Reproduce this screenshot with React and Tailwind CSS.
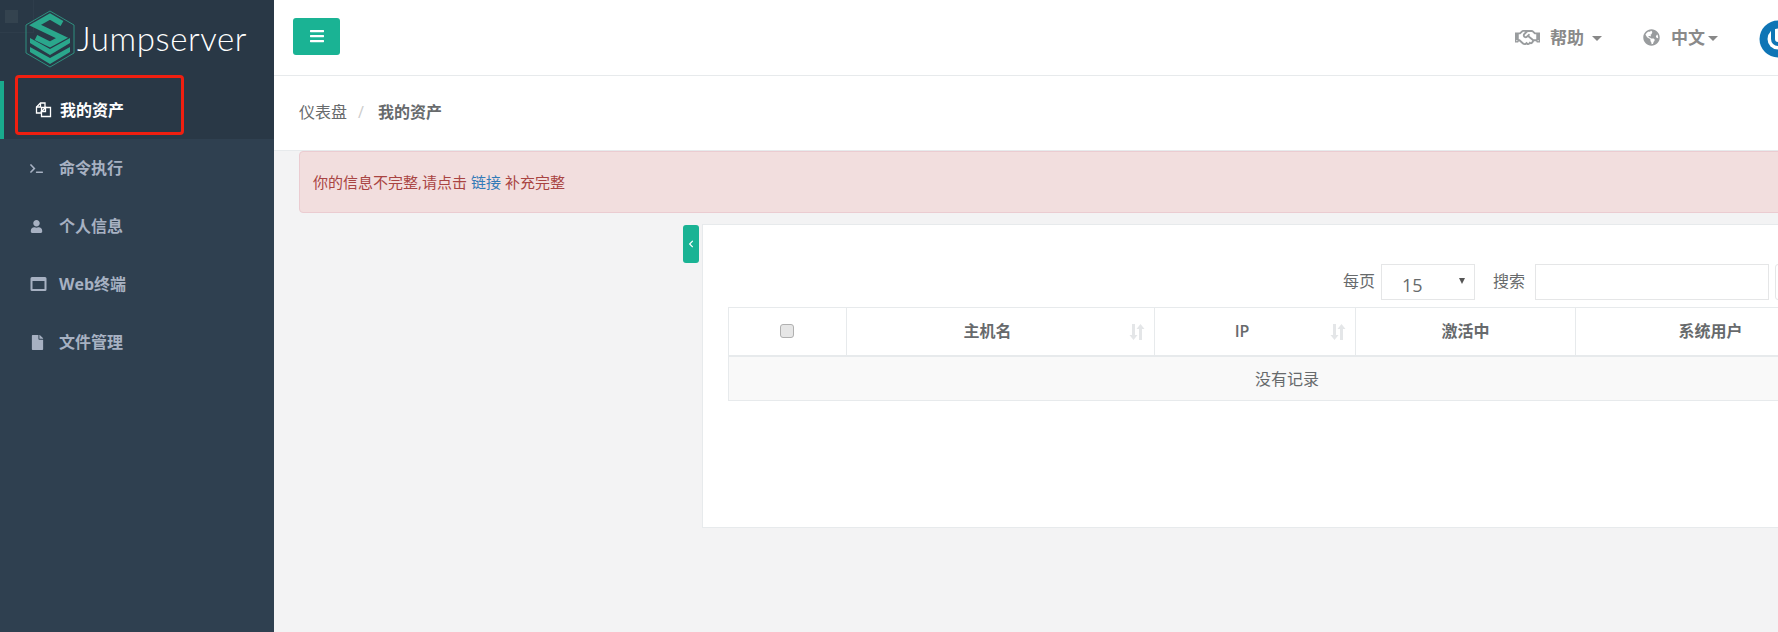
import React from "react";
import { FaTerminal, FaUser, FaFile, FaRegHandshake, FaGlobeAmericas, FaBars, FaChevronLeft } from "react-icons/fa";

const cjk = "font-['Open_Sans','Noto_Sans_CJK_SC',sans-serif]";

function Logo() {
  return (
    <svg width="50" height="58" viewBox="0 0 50 58" className="shrink-0">
      <path d="M25 1 L49 15 V43 L25 57 L1 43 V15 Z" fill="none" stroke="#2f8f7f" strokeWidth="1" />
      <path d="M5 28 L25 39 L45 28 V33 L25 45 L5 33 Z" fill="#2aa78c" />
      <path d="M5 37 L25 48 L45 37 V42 L25 54 L5 42 Z" fill="#2aa78c" />
      <path d="M37 13.500 L25 6.500 L10 15 L37 28 L25 34.500 L11 27.500" fill="none" stroke="#2aa78c" strokeWidth="5.500" />
    </svg>
  );
}

function FilesIcon() {
  return (
    <svg width="17" height="16" viewBox="0 0 17 16" fill="none" stroke="currentColor" strokeWidth="1.300">
      <path d="M6 11H1.500V5L5.500 1H10V5" />
      <path d="M1.500 5H5.500V1" />
      <path d="M6.500 5.500H15.500V14.500H6.500Z" fill="#293846" />
      <path d="M6.500 9.500L10.500 5.500V9.500Z" />
    </svg>
  );
}

function WindowIcon() {
  return (
    <svg width="17" height="14" viewBox="0 0 16 14">
      <path fillRule="evenodd" d="M1.500 0h13A1.500 1.500 0 0 1 16 1.500v11a1.500 1.500 0 0 1-1.500 1.500h-13A1.500 1.500 0 0 1 0 12.500v-11A1.500 1.500 0 0 1 1.500 0ZM2 4v8h12V4Z" fill="currentColor" />
    </svg>
  );
}

function SortIcon() {
  return (
    <svg width="16" height="18" viewBox="0 0 16 18" className="text-[#e4e6e8]">
      <path d="M3 1h3v11h2.500L4.500 17 .5 12H3Z M10 17h3V6h2.500L11.500 1 7.500 6H10Z" fill="currentColor" />
    </svg>
  );
}

function NavItem({ icon, label, active }) {
  return (
    <div className={active
      ? "h-[58px] flex items-center pl-[31px] border-l-4 border-[#19aa8d] bg-[#293846] text-white"
      : "h-[58px] flex items-center pl-[30px] text-[#a7b1c2]"}>
      <span className={active ? "w-[25px] flex items-center" : "w-[29px] flex items-center"}>{icon}</span>
      <span className="text-[16px] font-bold">{label}</span>
    </div>
  );
}

function HeadCell({ w, label, sort, bold, last }) {
  return (
    <div className={`relative shrink-0 h-full flex items-center justify-center text-[16px] text-[#676a6c] ${bold ? "font-bold" : "font-semibold"} ${last ? "" : "border-r border-[#e7eaec]"} ${sort ? "pr-[26px]" : ""} ${w}`}>
      <span className="-mt-[2px]">{label}</span>
      {sort && <span className="absolute right-[9px] top-[15px]"><SortIcon /></span>}
    </div>
  );
}

export default function App() {
  return (
    <div className={`relative w-[1778px] h-[632px] overflow-hidden flex bg-[#f3f3f4] ${cjk}`}>
      <aside className="w-[274px] shrink-0 bg-[#2f4050]">
        <div className="relative h-[81px] bg-[#293846] flex items-start pt-[10px] pl-[25px] gap-[2px] overflow-hidden">
          <div className="absolute left-[5px] top-[10px] w-[13px] h-[13px] bg-[#34434f]" />
          <div className="absolute left-0 top-0 w-[34px] h-[33px] border-r border-b border-[#2e3d4b]" />
          <div className="relative"><Logo /></div>
          <span className="relative font-['Lato',sans-serif] font-light text-white text-[33px] leading-[36px] mt-[10px] tracking-[0.6px]">Jumpserver</span>
        </div>
        <NavItem active icon={<FilesIcon />} label="我的资产" />
        <NavItem icon={<FaTerminal size={13} />} label="命令执行" />
        <NavItem icon={<FaUser size={13} />} label="个人信息" />
        <NavItem icon={<WindowIcon />} label="Web终端" />
        <NavItem icon={<FaFile size={15} />} label="文件管理" />
      </aside>

      <main className="flex-1 min-w-0 flex flex-col">
        <header className="h-[76px] shrink-0 bg-white border-b border-[#e7eaec] flex items-center pl-[19px]">
          <button className="w-[47px] h-[37px] -mt-[3px] rounded-[3px] bg-[#1ab394] text-white flex items-center justify-center">
            <FaBars size={16} />
          </button>
          <div className="ml-auto flex items-center text-[#8a8a8a]">
            <FaRegHandshake size={25} className="text-[#999c9e]" />
            <span className="ml-[10px] text-[17px] font-bold">帮助</span>
            <span className="ml-[8px] mt-[2px] border-x-[5px] border-x-transparent border-t-[5px] border-t-[#888]" />
            <FaGlobeAmericas size={17} className="ml-[41px] text-[#999c9e]" />
            <span className="ml-[11px] text-[17px] font-bold">中文</span>
            <span className="ml-[3px] mt-[2px] border-x-[5px] border-x-transparent border-t-[5px] border-t-[#888]" />
            <svg width="19" height="38" viewBox="0 0 19 38" className="ml-[41px] mt-[3px]">
              <circle cx="19" cy="19" r="18.500" fill="#0f75b5" />
              <circle cx="19" cy="19" r="10.500" fill="#fff" />
              <path d="M14 9 V19 A5 5 0 0 0 19 24" fill="none" stroke="#0f75b5" strokeWidth="4" />
            </svg>
          </div>
        </header>

        <div className="h-[75px] shrink-0 bg-white border-b border-[#e7eaec] flex items-center pl-[25px] text-[16px] text-[#676a6c]">
          <span className="-mt-[2px]">仪表盘</span>
          <span className="mx-[11px] -mt-[2px] text-[#cccccc]">/</span>
          <span className="ml-[3px] -mt-[2px] font-bold">我的资产</span>
        </div>

        <div className="shrink-0 mx-[25px] w-[1600px] h-[62px] rounded-[4px] border border-[#ebccd1] bg-[#f2dede] flex items-center pl-[13px] text-[15px] text-[#a94442]">
          <span>你的信息不完整,请点击</span>
          <span className="mx-[4px] text-[#337ab7]">链接</span>
          <span>补充完整</span>
        </div>

        <div className="flex mt-[11px] ml-[409px] w-[1400px]">
          <button className="w-[16px] h-[38px] mt-[1px] rounded-[3px] bg-[#1ab394] text-white flex items-center justify-center shrink-0">
            <FaChevronLeft size={8} />
          </button>
          <section className="ml-[3px] w-[1170px] h-[304px] shrink-0 bg-white border border-[#e7eaec] px-[25px] pt-[39px]">
            <div className="h-[36px] flex items-center justify-end text-[16px] text-[#676a6c]">
              <span className="mr-[6px] -mt-[3px]">每页</span>
              <div className="relative w-[94px] h-[36px] border border-[#e5e6e7] flex items-center pl-[20px]">
                <span className="mt-[6px] text-[18px]">15</span>
                <span className="absolute right-[9px] top-[13px] border-x-[3.500px] border-x-transparent border-t-[6px] border-t-[#555]" />
              </div>
              <span className="ml-[18px] mr-[10px] -mt-[3px]">搜索</span>
              <div className="w-[234px] h-[36px] border border-[#e5e6e7]" />
              <div className="ml-[6px] w-[71px] h-[36px] border border-[#e5e6e7] rounded-[3px]" />
            </div>
            <div className="mt-[7px] w-[1118px] border border-[#e7eaec]">
              <div className="h-[49px] flex border-b-2 border-[#e7eaec]">
                <div className="w-[118px] shrink-0 border-r border-[#e7eaec] flex items-center justify-center">
                  <span className="block w-[14px] h-[14px] -mt-[2px] -ml-[2px] rounded-[3px] border border-[#b0b0b0] bg-[#e6e6e6]" />
                </div>
                <HeadCell w="w-[308px]" label="主机名" sort bold />
                <HeadCell w="w-[201px]" label="IP" sort />
                <HeadCell w="w-[220px]" label="激活中" bold />
                <HeadCell w="flex-1" label="系统用户" bold last />
              </div>
              <div className="h-[43px] bg-[#f9f9f9] flex items-center justify-center text-[16px] text-[#676a6c]">
                <span>没有记录</span>
              </div>
            </div>
          </section>
        </div>
      </main>

      <div className="absolute left-[15px] top-[75px] w-[169px] h-[60px] rounded-[4px] border-[3px] border-[#f01f10]" />
    </div>
  );
}
